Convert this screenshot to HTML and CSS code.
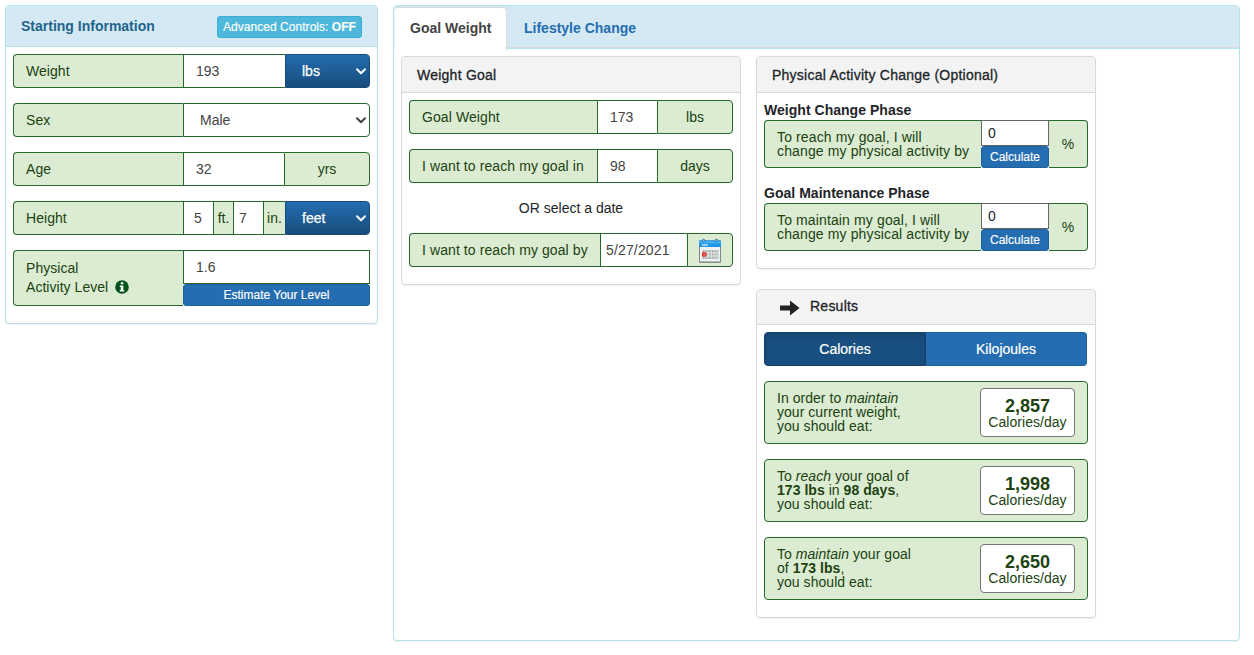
FILE: index.html
```html
<!DOCTYPE html>
<html lang="en">
<head>
<meta charset="utf-8">
<title>Body Weight Planner</title>
<link rel="stylesheet" href="styles.css">
</head>
<body>
<main class="planner">
  <section class="panel panel-info start">
    <header class="start-head">
      <h1>Starting Information</h1>
      <button class="adv">Advanced Controls: <b>OFF</b></button>
    </header>
    <div class="rows">
      <div class="group"><span class="label w170">Weight</span><span class="input w102">193</span>
        <span class="select-blue">lbs<svg class="chev" viewBox="0 0 10 7"><path d="M1 1.2l4 4 4-4"/></svg></span></div>
      <div class="group"><span class="label w170">Sex</span>
        <span class="input select-plain">Male<svg class="chev" viewBox="0 0 10 7"><path d="M1 1.2l4 4 4-4"/></svg></span></div>
      <div class="group"><span class="label w170">Age</span><span class="input w101">32</span><span class="unit grow">yrs</span></div>
      <div class="group"><span class="label w170">Height</span><span class="input w30 feet">5</span><span class="unit w20">ft.</span><span class="input w30 inch">7</span><span class="unit w22">in.</span>
        <span class="select-blue">feet<svg class="chev" viewBox="0 0 10 7"><path d="M1 1.2l4 4 4-4"/></svg></span></div>
      <div class="group tall"><span class="label w170 pal"><span>Physical<br>Activity Level
        <svg class="info" viewBox="0 0 14 14"><circle cx="7" cy="7" r="6.8" fill="#00511b"/><path d="M5.8 2.2h2.5v2H5.8zM4.8 5.4h3.5v4.5h1v1.7H4.8V9.900h1V7.100h-1z" fill="#fff"/></svg></span></span>
        <span class="stack grow"><span class="input pal-input">1.6</span><button class="btn estimate">Estimate Your Level</button></span></div>
    </div>
  </section>

  <section class="panel panel-info goal">
    <nav class="tabs"><a class="tab active">Goal Weight</a><a class="tab">Lifestyle Change</a></nav>
    <div class="columns">
      <section class="panel card weight-goal">
        <h2>Weight Goal</h2>
        <div class="rows">
          <div class="group"><span class="label w188">Goal Weight</span><span class="input w60">173</span><span class="unit grow">lbs</span></div>
          <div class="group"><span class="label w188">I want to reach my goal in</span><span class="input w60">98</span><span class="unit grow">days</span></div>
          <p class="or">OR select a date</p>
          <div class="group"><span class="label w191">I want to reach my goal by</span><span class="input w87 date">5/27/2021</span>
            <span class="unit grow"><svg class="cal" viewBox="0 0 24 25">
              <rect x="1.500" y="2.500" width="21" height="21.500" rx="1" fill="#eef2f2" stroke="#66706f" stroke-width=".8"/>
              <path d="M1 2.500h22v6.500H1z" fill="#1c95e6"/><path d="M1 2.500h22v3H1z" fill="#42aeef"/>
              <path d="M4 7h6" stroke="#fff" stroke-width="1.300" stroke-dasharray="1.500 .6"/>
              <rect x="4.500" y="12" width="16" height="9" fill="#a9b0af"/>
              <path d="M4 15h17M4 18h17M7.200 12v9M10.200 12v9M13.200 12v9M16.200 12v9M19 12v9" stroke="#eef2f2" stroke-width=".8"/>
              <path d="M4.500 14.800h3.300v3.300H4.500z" fill="#ff6a60" stroke="#d8201c" stroke-width="1"/>
              <circle cx="5.500" cy="2.500" r="1.300" fill="#8ccdf2" stroke="#226793" stroke-width=".8"/><circle cx="18.500" cy="2.500" r="1.300" fill="#8ccdf2" stroke="#226793" stroke-width=".8"/>
              <path d="M1 24.400h22" stroke="#78817b" stroke-width=".8"/></svg></span></div>
        </div>
      </section>
      <div class="side">
        <section class="panel card activity">
          <h2>Physical Activity Change (Optional)</h2>
          <div class="phases">
            <h3>Weight Change Phase</h3>
            <div class="group phase"><span class="label w217">To reach my goal, I will<br>change my physical activity by</span>
              <span class="stack w68"><span class="small-input">0</span><button class="btn calc">Calculate</button></span><span class="percent">%</span></div>
            <h3>Goal Maintenance Phase</h3>
            <div class="group phase"><span class="label w217">To maintain my goal, I will<br>change my physical activity by</span>
              <span class="stack w68"><span class="small-input">0</span><button class="btn calc">Calculate</button></span><span class="percent">%</span></div>
          </div>
        </section>
        <section class="panel card results">
          <h2><svg class="arrow" viewBox="0 0 20 16"><path d="M0 5.600h10V.500L19.500 8 10 15.500v-5.100H0z"/></svg>Results</h2>
          <div class="rows">
            <div class="toggle"><button class="on">Calories</button><button>Kilojoules</button></div>
            <div class="result"><p>In order to <i>maintain</i><br>your current weight,<br>you should eat:</p><div class="value"><b>2,857</b>Calories/day</div></div>
            <div class="result"><p>To <i>reach</i> your goal of<br><b>173 lbs</b> in <b>98 days</b>,<br>you should eat:</p><div class="value"><b>1,998</b>Calories/day</div></div>
            <div class="result"><p>To <i>maintain</i> your goal<br>of <b>173 lbs</b>,<br>you should eat:</p><div class="value"><b>2,650</b>Calories/day</div></div>
          </div>
        </section>
      </div>
    </div>
  </section>
</main>
</body>
</html>
```
FILE: styles.css
```css
* { box-sizing: border-box; }
body { margin: 0; background: #fff; color: #212529; font: 14px/20px "Liberation Sans", Arial, sans-serif; }
h1, h2, h3, p { margin: 0; }
button { font-family: inherit; margin: 0; padding: 0; }
.planner { display: flex; align-items: flex-start; gap: 15px; padding: 5px 14px 5px 5px; }
.panel { background: #fff; border: 1px solid #d9d9d9; border-radius: 4px; box-shadow: 0 1px 1px rgba(0,0,0,.06); }
.panel-info { border-color: #b4e3ea; }
.start { width: 373px; height: 319px; }
.start-head { display: flex; justify-content: space-between; align-items: center; height: 41px; padding: 0 15px; background: #d4e9f4; border-bottom: 1px solid #b4e3ea; border-radius: 3px 3px 0 0; }
h1 { font-size: 14px; line-height: 20px; color: #23648a; }
.adv { width: 145px; height: 22px; margin-top: 1px; border: 1px solid #3caed6; border-radius: 3px; background: #4db8db; color: #fff; font-size: 12px; line-height: 18px; letter-spacing: .04px; white-space: nowrap; -webkit-text-stroke: .15px #fff; }
.rows { display: flex; flex-direction: column; gap: 15px; padding: 7px; }

.group { display: flex; height: 34px; white-space: nowrap; }
.tall { height: 56px; }
.label { display: flex; align-items: center; padding-left: 12px; background: #dbecd3; border: 1px solid #25692b; border-right: 0; border-radius: 4px 0 0 4px; color: #20420f; letter-spacing: .09px; }
.start .label { letter-spacing: .04px; }
.input { display: flex; align-items: center; padding-left: 12px; background: #fff; border: 1px solid #25692b; border-right: 0; color: #444; }
.unit { display: flex; align-items: center; justify-content: center; background: #dbecd3; border: 1px solid #25692b; border-right: 0; color: #20420f; }
.unit:last-child { border-right: 1px solid #25692b; border-radius: 0 4px 4px 0; }
.grow { flex: 1; }
.w170 { width: 170px; } .w102 { width: 102px; } .w101 { width: 101px; }
.w30 { width: 30px; } .w20 { width: 20px; } .w22 { width: 22px; }
.w188 { width: 188px; } .w60 { width: 60px; } .w191 { width: 191px; } .w87 { width: 87px; }
.w217 { width: 217px; } .w68 { width: 68px; }
.feet { padding-left: 10px; }
.inch, .date { padding-left: 5px; }
.date { letter-spacing: .15px; }
.select-blue, .select-plain { flex: 1; display: flex; align-items: center; justify-content: space-between; padding: 0 3px 0 16px; }
.select-blue { border: 1px solid #194b7a; border-radius: 0 4px 4px 0; background: linear-gradient(#246db0, #184c7b); color: #fff; -webkit-text-stroke: .25px #fff; }
.select-plain { border-right: 1px solid #25692b; border-radius: 0 4px 4px 0; }
.chev { width: 10px; height: 7px; fill: none; stroke: currentColor; stroke-width: 2; stroke-linecap: round; stroke-linejoin: round; }
.pal { line-height: 19px; }
.info { width: 14px; height: 14px; margin-left: 3px; vertical-align: -2px; }
.stack { display: flex; flex-direction: column; }
.pal-input { height: 34px; border-right: 1px solid #25692b; }
.btn { border: 1px solid #1f619f; background: #246db0; color: #fff; font-size: 12px; -webkit-text-stroke: .15px #fff; }
.estimate { height: 22px; border-radius: 3px; }

.goal { flex: 1; height: 636px; }
.tabs { display: flex; height: 43px; padding-top: 1px; background: linear-gradient(#d4e9f4 41px, #d9dade 41px, #d9dade 42px, #b4e3ea 42px); border-radius: 3px 3px 0 0; font-weight: bold; }
.tab { height: 42px; padding: 11px 15px 0 17px; color: #246db0; }
.active { width: 113px; height: 43px; border: 1px solid #d9d9d9; border-bottom: 0; border-left-color: #e8f1f3; border-radius: 4px 4px 0 0; background: #fff; padding: 10px 0 0 15px; color: #444; }
.columns { display: flex; align-items: flex-start; gap: 15px; padding: 7px; }
.card { width: 340px; flex: none; }
h2 { display: flex; align-items: center; height: 36px; padding-left: 15px; background: #f3f3f3; border-bottom: 1px solid #d9d9d9; border-radius: 3px 3px 0 0; font-size: 14px; font-weight: normal; letter-spacing: .24px; -webkit-text-stroke: .3px currentColor; }
.weight-goal { height: 229px; }
.or { height: 20px; text-align: center; }
.cal { width: 24px; height: 25px; }
.side { display: flex; flex-direction: column; gap: 20px; }
.activity { height: 213px; }
.phases { padding: 7px; }
h3 { height: 20px; font-size: 14px; line-height: 20px; letter-spacing: .03px; }
.phase { height: 48px; line-height: 14px; margin-bottom: 15px; }
.phase .label { letter-spacing: .13px; }
.small-input { height: 26px; padding: 5px 6px; border: 1px solid #666; background: #fff; line-height: 15px; }
.calc { height: 22px; border-radius: 3px; }
.percent { flex: 1; display: flex; align-items: center; justify-content: center; background: #dbecd3; border: 1px solid #25692b; border-left: 0; border-radius: 0 4px 4px 0; color: #20420f; }
.results { height: 329px; }
.results h2 { height: 35px; padding-left: 23px; gap: 10px; padding-bottom: 2px; }
.arrow { width: 20px; height: 16px; margin-top: 4px; fill: #222; stroke: none; }
.toggle { display: flex; width: 323px; height: 34px; }
.toggle button { flex: 1; border: 1px solid #1f619f; border-left: 0; border-radius: 0 4px 4px 0; background: #246db0; color: #fff; font-size: 14px; -webkit-text-stroke: .2px #fff; }
.toggle .on { border: 1px solid #123f66; border-radius: 4px 0 0 4px; background: #194f80; box-shadow: inset 0 3px 5px rgba(0,0,0,.125); }
.result { display: flex; justify-content: space-between; align-items: center; height: 63px; padding: 0 12px; border: 1px solid #25692b; border-radius: 4px; background: #dbecd3; color: #20420f; line-height: 14px; letter-spacing: .04px; }
.result p { padding-bottom: 2px; }
.value { width: 95px; height: 49px; padding-top: 8px; border: 1px solid #777; border-radius: 4px; background: #fff; text-align: center; white-space: nowrap; }
.value b { display: block; font-size: 18px; line-height: 18px; }
```
